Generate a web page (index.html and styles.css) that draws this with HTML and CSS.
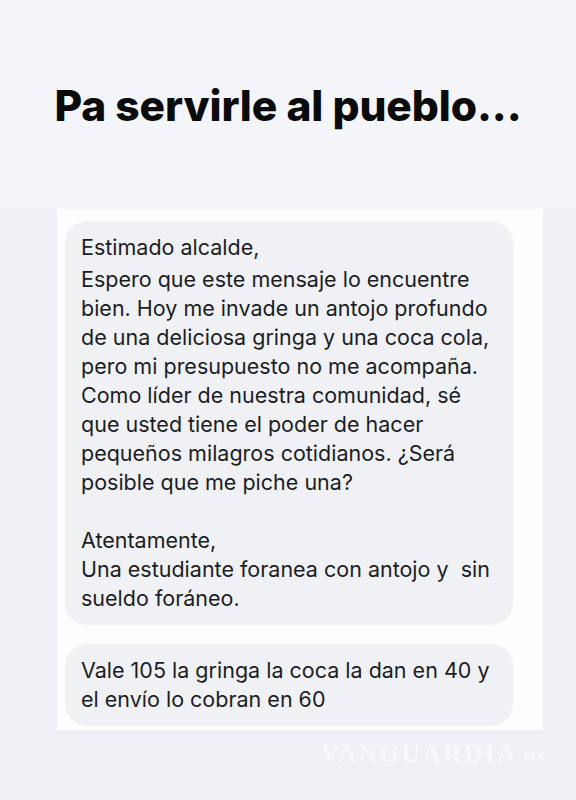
FILE: index.html
```html
<!DOCTYPE html>
<html lang="es">
<head>
    <meta charset="UTF-8">
    <meta name="viewport" content="width=device-width, initial-scale=1.0">
    <title>Pa servirle al pueblo...</title>
    <link rel="stylesheet" href="styles.css">
</head>
<body>

<div class="header">
    <h1 class="title">Pa servirle al pueblo...</h1>
</div>

<div class="chat">
    <div class="bubble">
        <p class="greeting">Estimado alcalde,</p>
        <p>Espero que este mensaje lo encuentre<br>
        bien. Hoy me invade un antojo profundo<br>
        de una deliciosa gringa y una coca cola,<br>
        pero mi presupuesto no me acompaña.<br>
        Como líder de nuestra comunidad, sé<br>
        que usted tiene el poder de hacer<br>
        pequeños milagros cotidianos. ¿Será<br>
        posible que me piche una?</p>
        <p class="blank">&nbsp;</p>
        <p>Atentamente,<br>
        Una estudiante foranea con antojo y &nbsp;sin<br>
        sueldo foráneo.</p>
    </div>
    <div class="bubble">
        <p>Vale 105 la gringa la coca la dan en 40 y<br>
        el envío lo cobran en 60</p>
    </div>
</div>

<div class="watermark">VANGUARDIA<span class="mx">MX</span></div>

</body>
</html>
```

FILE: styles.css
```css
* {
    margin: 0;
    padding: 0;
    box-sizing: border-box;
}

body {
    background: #eef0f5;
    font-family: 'Inter', 'Noto Sans', sans-serif;
    color: #1d1d1f;
    width: 576px;
    height: 800px;
    overflow: hidden;
}

.header {
    background: #f4f5f9;
    height: 209px;
    padding-top: 81px;
}

.title {
    font-size: 42.5px;
    line-height: 50px;
    font-weight: 800;
    letter-spacing: -0.1px;
    text-align: center;
    color: #0b0b0c;
}

.chat {
    background: #fdfdfe;
    width: 486px;
    margin-left: 57px;
    padding: 12px 30px 4px 8px;
    display: flex;
    flex-direction: column;
    gap: 19px;
}

.bubble {
    background: #eff1f5;
    border-radius: 22px;
    padding: 12px 12px 12px 16px;
    font-size: 21.5px;
    line-height: 29px;
    white-space: nowrap;
}

.bubble .greeting {
    margin-bottom: 3px;
}

.watermark {
    width: 488px;
    margin-left: 57px;
    margin-top: 9px;
    text-align: right;
    font-family: 'Liberation Serif', serif;
    font-weight: bold;
    font-size: 26px;
    letter-spacing: 2px;
    color: rgba(255, 255, 255, 0.6);
}

.watermark .mx {
    font-size: 13px;
    letter-spacing: 0;
    margin-left: 6px;
    vertical-align: middle;
}
```
